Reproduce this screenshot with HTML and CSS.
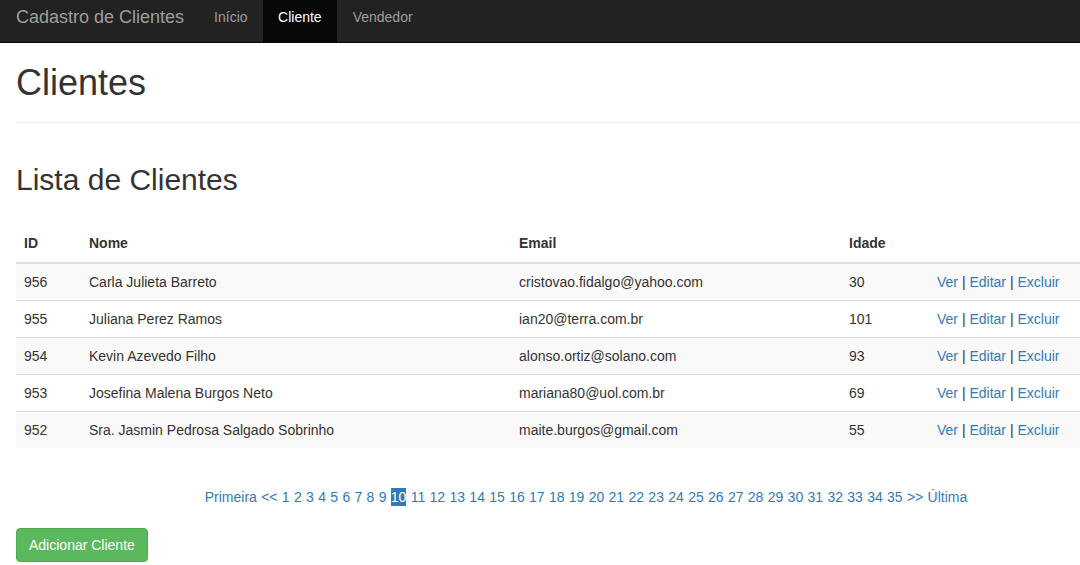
FILE: index.html
```html
<!DOCTYPE html>
<html lang="pt-BR">
<head>
<meta charset="utf-8">
<title>Cadastro de Clientes</title>
<link rel="stylesheet" href="styles.css">
</head>
<body>
<nav class="navbar">
  <a class="brand" href="#">Cadastro de Clientes</a>
  <ul class="nav">
    <li><a href="#">Início</a></li>
    <li class="active"><a href="#">Cliente</a></li>
    <li><a href="#">Vendedor</a></li>
  </ul>
</nav>
<main class="container">
  <div class="page-header">
    <h1>Clientes</h1>
  </div>
  <h2>Lista de Clientes</h2>
  <table class="table">
    <thead>
      <tr>
        <th class="c-id">ID</th>
        <th class="c-nome">Nome</th>
        <th class="c-email">Email</th>
        <th class="c-idade">Idade</th>
        <th class="c-acoes"></th>
      </tr>
    </thead>
    <tbody>
      <tr><td>956</td><td>Carla Julieta Barreto</td><td>cristovao.fidalgo@yahoo.com</td><td>30</td><td><a href="#">Ver</a> | <a href="#">Editar</a> | <a href="#">Excluir</a></td></tr>
      <tr><td>955</td><td>Juliana Perez Ramos</td><td>ian20@terra.com.br</td><td>101</td><td><a href="#">Ver</a> | <a href="#">Editar</a> | <a href="#">Excluir</a></td></tr>
      <tr><td>954</td><td>Kevin Azevedo Filho</td><td>alonso.ortiz@solano.com</td><td>93</td><td><a href="#">Ver</a> | <a href="#">Editar</a> | <a href="#">Excluir</a></td></tr>
      <tr><td>953</td><td>Josefina Malena Burgos Neto</td><td>mariana80@uol.com.br</td><td>69</td><td><a href="#">Ver</a> | <a href="#">Editar</a> | <a href="#">Excluir</a></td></tr>
      <tr><td>952</td><td>Sra. Jasmin Pedrosa Salgado Sobrinho</td><td>maite.burgos@gmail.com</td><td>55</td><td><a href="#">Ver</a> | <a href="#">Editar</a> | <a href="#">Excluir</a></td></tr>
    </tbody>
  </table>
  <div class="pagination">
    <a href="#">Primeira</a> <a href="#">&lt;&lt;</a> <a href="#">1</a> <a href="#">2</a> <a href="#">3</a> <a href="#">4</a> <a href="#">5</a> <a href="#">6</a> <a href="#">7</a> <a href="#">8</a> <a href="#">9</a> <span class="current">10</span> <a href="#">11</a> <a href="#">12</a> <a href="#">13</a> <a href="#">14</a> <a href="#">15</a> <a href="#">16</a> <a href="#">17</a> <a href="#">18</a> <a href="#">19</a> <a href="#">20</a> <a href="#">21</a> <a href="#">22</a> <a href="#">23</a> <a href="#">24</a> <a href="#">25</a> <a href="#">26</a> <a href="#">27</a> <a href="#">28</a> <a href="#">29</a> <a href="#">30</a> <a href="#">31</a> <a href="#">32</a> <a href="#">33</a> <a href="#">34</a> <a href="#">35</a> <a href="#">&gt;&gt;</a> <a href="#">Última</a>
  </div>
  <a class="btn-success" href="#">Adicionar Cliente</a>
</main>
</body>
</html>
```
FILE: styles.css
```css
html, body {
  margin: 0;
  padding: 0;
}
body {
  font-family: "Liberation Sans", Arial, Helvetica, sans-serif;
  font-size: 14px;
  line-height: 20px;
  color: #333;
  background: #fff;
  overflow: hidden;
}
a {
  color: #337ab7;
  text-decoration: none;
}
.navbar {
  display: flex;
  height: 43px;
  background: #222;
  border-bottom: 1px solid #080808;
  box-sizing: border-box;
  padding-left: 1px;
}
.brand {
  font-size: 18px;
  line-height: 20px;
  padding: 7px 15px 15px 15px;
  color: #9d9d9d;
}
.nav {
  display: flex;
  list-style: none;
  margin: 0;
  padding: 0;
}
.nav a {
  display: block;
  padding: 7px 15px 15px 15px;
  color: #9d9d9d;
  height: 42px;
  box-sizing: border-box;
}
.nav li + li a {
  padding-left: 15.5px;
}
.nav .active a {
  color: #fff;
  background: #080808;
  padding-right: 15.5px;
}
.container {
  width: 1140px;
  padding-left: 16px;
}
.page-header {
  padding-bottom: 9px;
  margin: 0 0 20px 0;
  border-bottom: 1px solid #eee;
}
h1 {
  font-size: 36px;
  font-weight: 500;
  line-height: 1.1;
  margin: 20px 0 10px 0;
}
h2 {
  font-size: 30px;
  font-weight: 500;
  line-height: 1.1;
  margin: 40px 0 30px 0;
}
.table {
  width: 100%;
  border-collapse: collapse;
  border-spacing: 0;
  margin-bottom: 20px;
}
.table th {
  text-align: left;
  font-weight: bold;
  vertical-align: bottom;
  padding: 7px 8px 9px 8px;
  border-bottom: 2px solid #ddd;
}
.table td {
  padding: 8px;
  border-top: 1px solid #ddd;
  vertical-align: top;
}
.table thead + tbody tr:first-child td {
  border-top: 0;
}
.table tbody tr:nth-child(odd) {
  background: #f9f9f9;
}
.c-id { width: 49px; }
.c-nome { width: 414px; }
.c-email { width: 314px; }
.c-idade { width: 72px; }
.pagination {
  text-align: center;
  word-spacing: 0.42px;
  padding: 19px 0 21px 0;
}
.pagination .current {
  background: #337ab7;
  color: #fff;
  padding: 1px 0;
}
.btn-success {
  display: inline-block;
  padding: 6px 12px;
  font-size: 14px;
  line-height: 20px;
  color: #fff;
  background: #5cb85c;
  border: 1px solid #4cae4c;
  border-radius: 4px;
}
```
